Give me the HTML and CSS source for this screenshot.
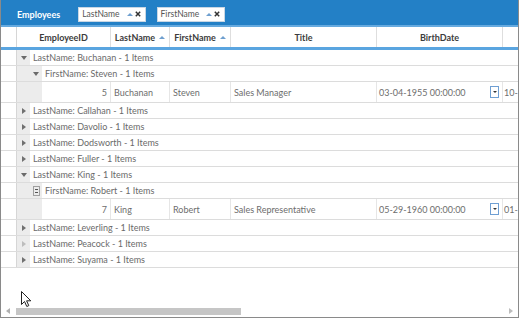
FILE: index.html
```html
<!DOCTYPE html>
<html lang="en">
<head>
  <meta charset="utf-8">
  <title>Employees grid</title>
  <link rel="stylesheet" href="styles.css">
</head>
<body>
  <div class="grid">
    <div class="panel">
      <span class="panel-title">Employees</span>
      <span class="chip">LastName<i class="sort"></i><svg class="close" width="6" height="6" viewBox="0 0 6 6"><path d="M0.8 0.8L5.2 5.2M5.2 0.8L0.8 5.2" stroke="#333" stroke-width="1.5"/></svg></span>
      <span class="chip">FirstName<i class="sort"></i><svg class="close" width="6" height="6" viewBox="0 0 6 6"><path d="M0.8 0.8L5.2 5.2M5.2 0.8L0.8 5.2" stroke="#333" stroke-width="1.5"/></svg></span>
    </div>

    <div class="viewport">
      <div class="head">
        <div class="ind"></div>
        <div class="hc c-id">EmployeeID</div>
        <div class="hc c-last">LastName <i class="sort"></i></div>
        <div class="hc c-first">FirstName <i class="sort"></i></div>
        <div class="hc c-title">Title</div>
        <div class="hc c-birth">BirthDate</div>
        <div class="hc c-more"></div>
      </div>

      <div class="grow">
        <div class="ind"></div>
        <div class="exp"><i class="down"></i></div>
        <div class="txt">LastName: Buchanan - 1 Items</div>
      </div>
      <div class="grow">
        <div class="ind"></div>
        <div class="lvl"></div>
        <div class="exp exp2"><i class="down"></i></div>
        <div class="txt">FirstName: Steven - 1 Items</div>
      </div>
      <div class="drow">
        <div class="ind"></div>
        <div class="lvl"></div>
        <div class="lvl lvl2"></div>
        <div class="dc d-id">5</div>
        <div class="dc c-last">Buchanan</div>
        <div class="dc c-first">Steven</div>
        <div class="dc c-title">Sales Manager</div>
        <div class="dc c-birth">03-04-1955 00:00:00<span class="dd"><i></i></span></div>
        <div class="dc c-more">10-</div>
      </div>
      <div class="grow">
        <div class="ind"></div>
        <div class="exp"><i class="right"></i></div>
        <div class="txt">LastName: Callahan - 1 Items</div>
      </div>
      <div class="grow">
        <div class="ind"></div>
        <div class="exp"><i class="right"></i></div>
        <div class="txt">LastName: Davolio - 1 Items</div>
      </div>
      <div class="grow">
        <div class="ind"></div>
        <div class="exp"><i class="right"></i></div>
        <div class="txt">LastName: Dodsworth - 1 Items</div>
      </div>
      <div class="grow">
        <div class="ind"></div>
        <div class="exp"><i class="right"></i></div>
        <div class="txt">LastName: Fuller - 1 Items</div>
      </div>
      <div class="grow">
        <div class="ind"></div>
        <div class="exp"><i class="down"></i></div>
        <div class="txt">LastName: King - 1 Items</div>
      </div>
      <div class="grow">
        <div class="ind"></div>
        <div class="lvl"></div>
        <div class="exp exp2">
          <svg width="7" height="10" viewBox="0 0 7 10"><rect x="0.5" y="0.5" width="6" height="9" fill="none" stroke="#555" stroke-dasharray="1 1"/><path d="M2 3.5H5M2 6.5H5" stroke="#555"/></svg>
        </div>
        <div class="txt">FirstName: Robert - 1 Items</div>
      </div>
      <div class="drow">
        <div class="ind"></div>
        <div class="lvl"></div>
        <div class="lvl lvl2"></div>
        <div class="dc d-id">7</div>
        <div class="dc c-last">King</div>
        <div class="dc c-first">Robert</div>
        <div class="dc c-title">Sales Representative</div>
        <div class="dc c-birth">05-29-1960 00:00:00<span class="dd"><i></i></span></div>
        <div class="dc c-more">01-</div>
      </div>
      <div class="grow">
        <div class="ind"></div>
        <div class="exp"><i class="right"></i></div>
        <div class="txt">LastName: Leverling - 1 Items</div>
      </div>
      <div class="grow">
        <div class="ind"></div>
        <div class="exp"><i class="right light"></i></div>
        <div class="txt">LastName: Peacock - 1 Items</div>
      </div>
      <div class="grow">
        <div class="ind"></div>
        <div class="exp"><i class="right"></i></div>
        <div class="txt">LastName: Suyama - 1 Items</div>
      </div>
    </div>

    <div class="hscroll">
      <span class="arr"><i class="left"></i></span>
      <span class="thumb"></span>
      <span class="spacer"></span>
      <span class="arr"><i class="right light"></i></span>
    </div>

    <svg class="cursor" width="11" height="17" viewBox="0 0 11 17"><path d="M0.5 0.5V13.5L3.5 10.5L5.8 15.5L7.8 14.6L5.6 9.8H9.8Z" fill="#fff" stroke="#222" stroke-width="1" stroke-linejoin="round"/></svg>
  </div>
</body>
</html>
```

FILE: styles.css
```css
body { margin: 0; font-family: Lato, "Open Sans", sans-serif; font-size: 9px; background: #fff; }

.grid { width: 519px; height: 318px; box-sizing: border-box; border: 1px solid #8a8a8a; border-top: 0; display: flex; flex-direction: column; position: relative; overflow: hidden; }

.panel { margin: 0 -1px; height: 27px; box-sizing: border-box; background: #2380c6; border-bottom: 2px solid #66aadf; display: flex; align-items: center; padding: 3px 0 0 17px; }
.panel-title { color: #fff; font-weight: bold; margin-right: 18px; }
.chip { height: 15px; box-sizing: border-box; background: #fff; border: 1px solid #c9d7e4; color: #555; font-size: 8.5px; display: inline-flex; align-items: center; padding: 0 4px 0 3px; margin-right: 11px; }
.chip .sort { margin: 0 2px 0 7px; }
.close { display: block; }

.sort { display: inline-block; width: 0; height: 0; border-left: 3px solid transparent; border-right: 3px solid transparent; border-bottom: 3px solid #6f9fcf; margin-left: 4px; }

.viewport { flex: 1; overflow: hidden; }

.head { display: flex; height: 23px; box-sizing: border-box; border-bottom: 3px solid #5aa5e0; }
.hc { flex: none; box-sizing: border-box; border-right: 1px solid #dedede; display: flex; align-items: center; justify-content: center; font-weight: bold; color: #3c3c3c; white-space: nowrap; }

.ind { flex: none; width: 16px; box-sizing: border-box; border-right: 1px solid #d6d6d6; }
.c-id { width: 94px; }
.c-last { width: 59px; }
.c-first { width: 61px; }
.c-title { width: 146px; }
.c-birth { width: 126px; }
.c-more { width: 80px; }

.grow { display: flex; height: 16px; box-sizing: border-box; border-bottom: 1px solid #dcdcdc; }
.exp { flex: none; width: 13px; background: #ececec; display: flex; align-items: center; justify-content: center; }
.exp2 { width: 12px; }
.lvl { flex: none; width: 13px; background: #ececec; }
.lvl2 { width: 12px; }
.txt { padding-left: 3px; color: #6a6a6a; line-height: 15px; white-space: nowrap; }

.down { display: block; width: 0; height: 0; border-left: 3px solid transparent; border-right: 3px solid transparent; border-top: 4px solid #6a6a6a; }
.right { display: block; width: 0; height: 0; border-top: 3px solid transparent; border-bottom: 3px solid transparent; border-left: 4px solid #707070; }
.left { display: block; width: 0; height: 0; border-top: 3px solid transparent; border-bottom: 3px solid transparent; border-right: 4px solid #b0b0b0; }
.right.light { border-left-color: #bdbdbd; }

.drow { display: flex; height: 21px; box-sizing: border-box; border-bottom: 1px solid #dcdcdc; }
.dc { flex: none; box-sizing: border-box; border-right: 1px solid #e6e6e6; display: flex; align-items: center; padding: 0 3px; color: #6d6d6d; white-space: nowrap; overflow: hidden; }
.d-id { width: 69px; justify-content: flex-end; }
.c-birth.dc { padding-left: 2px; justify-content: space-between; }
.dd { width: 9px; height: 12px; box-sizing: border-box; border: 1px solid #6f9fd3; background: #fff; display: flex; align-items: center; justify-content: center; }
.dd i { display: block; width: 0; height: 0; border-left: 2px solid transparent; border-right: 2px solid transparent; border-top: 2px solid #333; }
.c-more.dc { padding-left: 1px; }

.hscroll { flex: none; height: 12px; display: flex; align-items: center; }
.arr { width: 14px; display: flex; justify-content: center; }
.thumb { width: 225px; height: 7px; margin-left: 1px; background: #c6c6c6; }
.spacer { flex: 1; }

.cursor { position: absolute; left: 20px; top: 291px; }
```
